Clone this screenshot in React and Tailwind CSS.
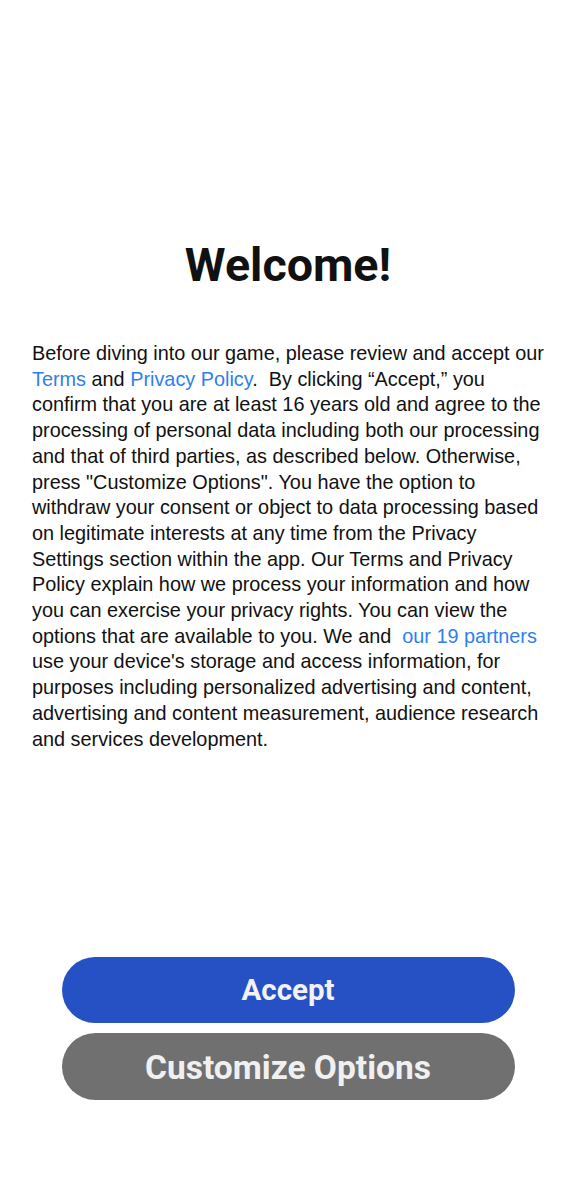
export default function App() {
    const link = "text-[#2f80ed]";
    return (
        <div className="bg-white h-[1199px] w-full flex flex-col">
            <h1 className="pt-[237px] text-center text-[46.6px] leading-[56px] font-bold text-[#111111] font-['Roboto',sans-serif]">
                Welcome!
            </h1>
            <p className="mt-[48px] pl-[32px] pr-[24px] text-[19.85px] leading-[25.7px] text-[#111111] font-['Liberation_Sans',Arial,sans-serif]">
                Before diving into our game, please review and accept our{" "}
                <span className={link}>Terms</span> and <span className={link}>Privacy Policy</span>.&nbsp; By clicking “Accept,” you confirm that you are at least 16 years old and agree to the processing of personal data including both our processing and that of third parties, as described below. Otherwise, press "Customize Options". You have the option to withdraw your consent or object to data processing based on legitimate interests at any time from the Privacy Settings section within the app. Our Terms and Privacy Policy explain how we process your information and how you can exercise your privacy rights. You can view the options that are available to you. We and&nbsp; <span className={link}>our 19 partners</span> use your device's storage and access information, for purposes including personalized advertising and content, advertising and content measurement, audience research and services development.
            </p>
            <div className="flex-1"/>
            <div className="flex flex-col items-center gap-[10px] pb-[99px] font-['Roboto',sans-serif]">
                <button className="w-[453px] h-[66px] rounded-full bg-[#2651c4] text-[#f2f2f2] text-[29.5px] font-bold">
                    Accept
                </button>
                <button className="w-[453px] h-[67px] pt-[3px] rounded-full bg-[#707070] text-[#f0f0f0] text-[33.5px] font-bold">
                    Customize Options
                </button>
            </div>
        </div>
    )
}
